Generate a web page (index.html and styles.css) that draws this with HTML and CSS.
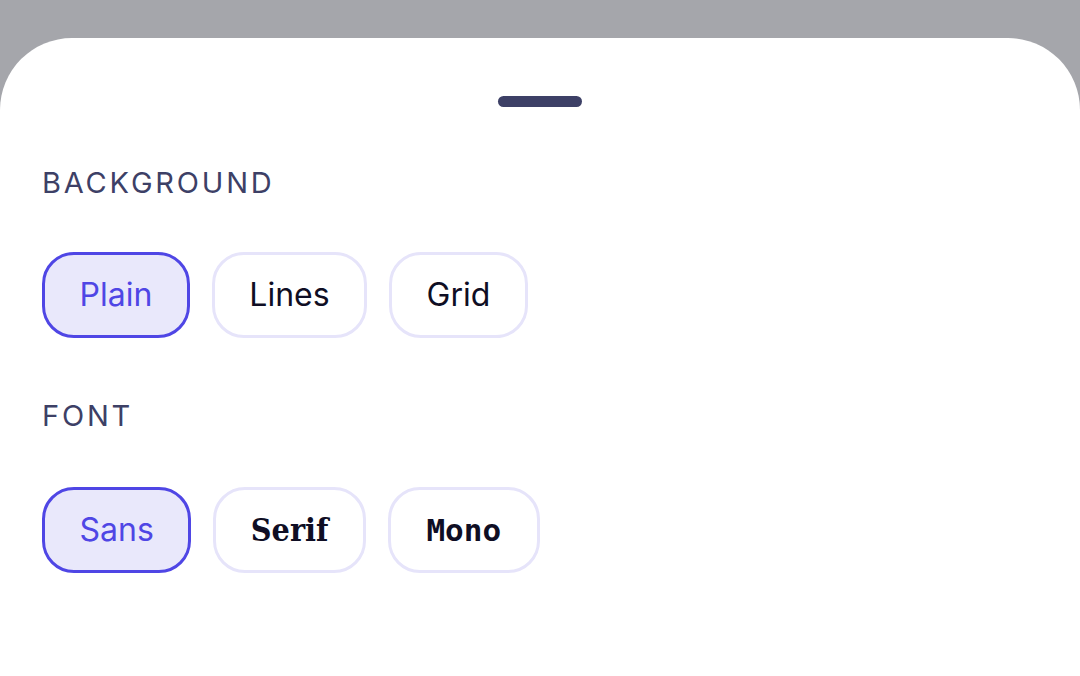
FILE: index.html
```html
<!DOCTYPE html>
<html lang="en">
<head>
<meta charset="utf-8">
<title>Settings</title>
<link rel="stylesheet" href="styles.css">
</head>
<body>
<div class="sheet">
  <div class="handle"></div>
  <section class="group group-bg">
    <h2 class="label">BACKGROUND</h2>
    <div class="chips">
      <button class="chip active">Plain</button>
      <button class="chip">Lines</button>
      <button class="chip">Grid</button>
    </div>
  </section>
  <section class="group group-font">
    <h2 class="label">FONT</h2>
    <div class="chips">
      <button class="chip active">Sans</button>
      <button class="chip serif">Serif</button>
      <button class="chip mono">Mono</button>
    </div>
  </section>
</div>
</body>
</html>
```

FILE: styles.css
```css
html, body {
  margin: 0;
  padding: 0;
  height: 100%;
}
body {
  background: #a5a6ab;
  font-family: Inter, "Noto Sans", sans-serif;
  overflow: hidden;
}
.sheet {
  margin-top: 38px;
  height: calc(100% - 38px);
  background: #ffffff;
  border-radius: 72px 72px 0 0;
  padding: 0 42px;
  box-sizing: border-box;
  display: flex;
  flex-direction: column;
}
.handle {
  align-self: center;
  width: 84px;
  height: 11px;
  border-radius: 6px;
  background: #3d4066;
  margin-top: 58px;
}
.group {
  display: flex;
  flex-direction: column;
}
.group-bg {
  margin-top: 58px;
}
.group-font {
  margin-top: 60px;
}
.label {
  margin: 0;
  font-size: 29px;
  line-height: 36px;
  font-weight: 400;
  letter-spacing: 2.8px;
  color: #3d4066;
}
.chips {
  display: flex;
  gap: 22px;
  margin-top: 51px;
}
.group-font .chips {
  margin-top: 53px;
}
.chip {
  height: 86px;
  box-sizing: border-box;
  padding: 0 34.5px;
  border: 3px solid #e6e4fa;
  border-radius: 32px;
  background: #ffffff;
  color: #0f0e24;
  font-family: Inter, "Noto Sans", sans-serif;
  font-size: 32px;
  font-weight: 400;
  display: flex;
  align-items: center;
  justify-content: center;
  line-height: 1;
}
.chip.active {
  border-color: #4f46e5;
  background: #e9e8fb;
  color: #4f46e5;
}
.chip.serif {
  font-family: "DejaVu Serif", serif;
  font-weight: 700;
  font-size: 32px;
  font-stretch: semi-condensed;
}
.chip.mono {
  font-family: "DejaVu Sans Mono", monospace;
  font-weight: 700;
  font-size: 31px;
  padding: 0 35.5px;
}
```
